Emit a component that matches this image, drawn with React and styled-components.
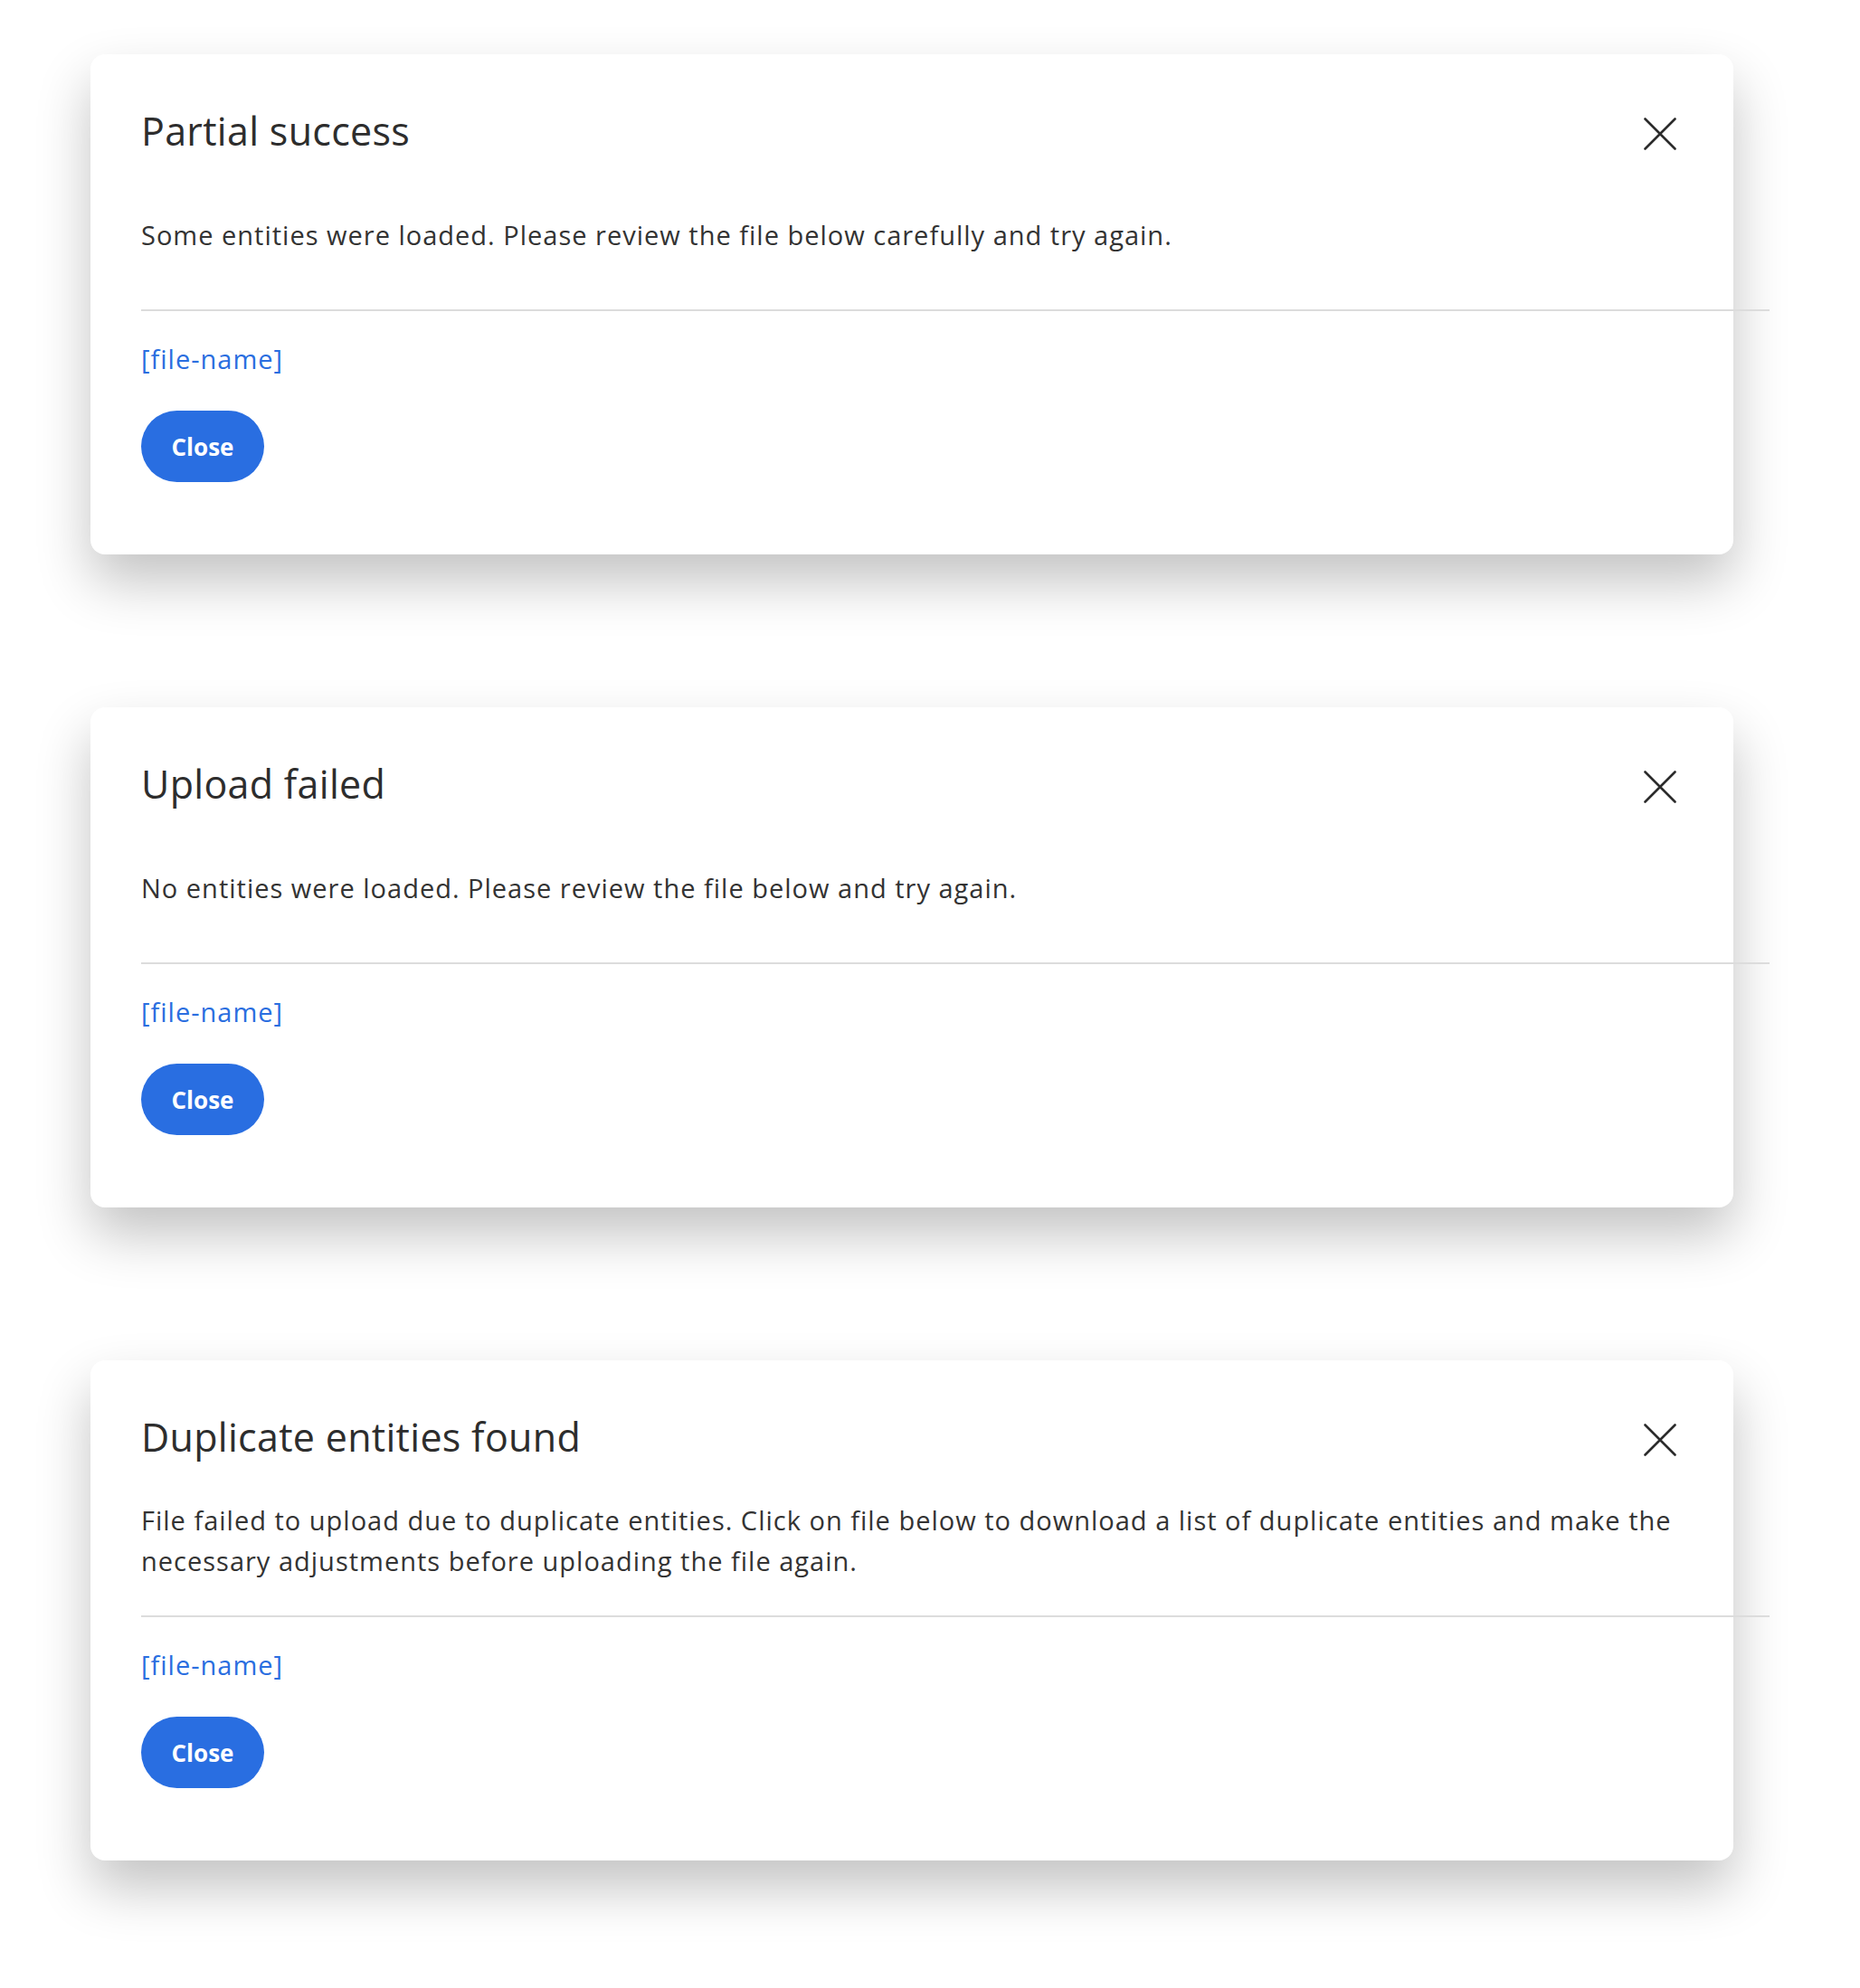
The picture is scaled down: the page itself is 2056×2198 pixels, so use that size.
import styled, { createGlobalStyle } from 'styled-components'

const GlobalStyle = createGlobalStyle`
  html, body {
    margin: 0;
    padding: 0;
    background: #ffffff;
  }
  body {
    font-family: 'Open Sans', Lato, 'Liberation Sans', sans-serif;
    color: #333333;
  }
`

const dialogs = [
  {
    title: 'Partial success',
    text: 'Some entities were loaded. Please review the file below carefully and try again.',
  },
  {
    title: 'Upload failed',
    text: 'No entities were loaded. Please review the file below and try again.',
  },
  {
    title: 'Duplicate entities found',
    text: 'File failed to upload due to duplicate entities. Click on file below to download a list of duplicate entities and make the necessary adjustments before uploading the file again.',
  },
]

const CloseIcon = () => (
  <svg width='36' height='36' viewBox='0 0 36 36' fill='none'>
    <path d='M1.5 1.5L34.5 34.5M34.5 1.5L1.5 34.5' stroke='#2b2b2b' strokeWidth='2.6' strokeLinecap='round' />
  </svg>
)

const Dialog = ({ title, text }) => (
  <Card>
    <Header>
      <Title>{title}</Title>
      <IconButton aria-label='Close'>
        <CloseIcon />
      </IconButton>
    </Header>
    <Body>
      <Message>{text}</Message>
    </Body>
    <Divider />
    <FileLink href='#'>[file-name]</FileLink>
    <Actions>
      <PrimaryButton>Close</PrimaryButton>
    </Actions>
  </Card>
)

const App = () => (
  <>
    <GlobalStyle />
    <Page>
      {dialogs.map((d) => (
        <Dialog key={d.title} title={d.title} text={d.text} />
      ))}
    </Page>
  </>
)

const Page = styled.div`
  display: flex;
  flex-direction: column;
  gap: 169px;
  padding: 60px 0 140px 100px;
`

const Card = styled.section`
  width: 1816px;
  box-sizing: border-box;
  background: #ffffff;
  border-radius: 16px;
  box-shadow: 0 30px 60px rgba(0, 0, 0, 0.24);
  padding: 60px 63px 80px 56px;
  display: flex;
  flex-direction: column;
`

const Header = styled.div`
  display: flex;
  align-items: center;
  justify-content: space-between;
  height: 50px;
`

const Title = styled.h2`
  margin: 0;
  font-size: 43px;
  line-height: 50px;
  font-weight: 400;
  letter-spacing: 0.3px;
  color: #2d2d2d;
`

const IconButton = styled.button`
  border: none;
  background: transparent;
  padding: 0;
  width: 36px;
  height: 36px;
  display: flex;
  margin-top: 6px;
  cursor: pointer;
`

const Body = styled.div`
  height: 172px;
  display: flex;
  align-items: center;
  padding-top: 6px;
  box-sizing: border-box;
`

const Message = styled.p`
  margin: 0;
  font-size: 29px;
  line-height: 45px;
  letter-spacing: 1px;
  color: #333333;
  max-width: 1700px;
`

const Divider = styled.hr`
  width: 1800px;
  margin: 0;
  border: none;
  height: 2px;
  background: #dcdcdc;
`

const FileLink = styled.a`
  margin-top: 30px;
  align-self: flex-start;
  font-size: 29px;
  line-height: 45px;
  letter-spacing: 1px;
  color: #2a6ee0;
  text-decoration: none;
`

const Actions = styled.div`
  display: flex;
  margin-top: 35px;
`

const PrimaryButton = styled.button`
  width: 136px;
  height: 79px;
  padding: 0;
  border: none;
  border-radius: 40px;
  background: #296ee1;
  color: #ffffff;
  font-family: 'Open Sans', Lato, 'Liberation Sans', sans-serif;
  font-size: 26px;
  font-weight: 700;
  cursor: pointer;
`

export default App
